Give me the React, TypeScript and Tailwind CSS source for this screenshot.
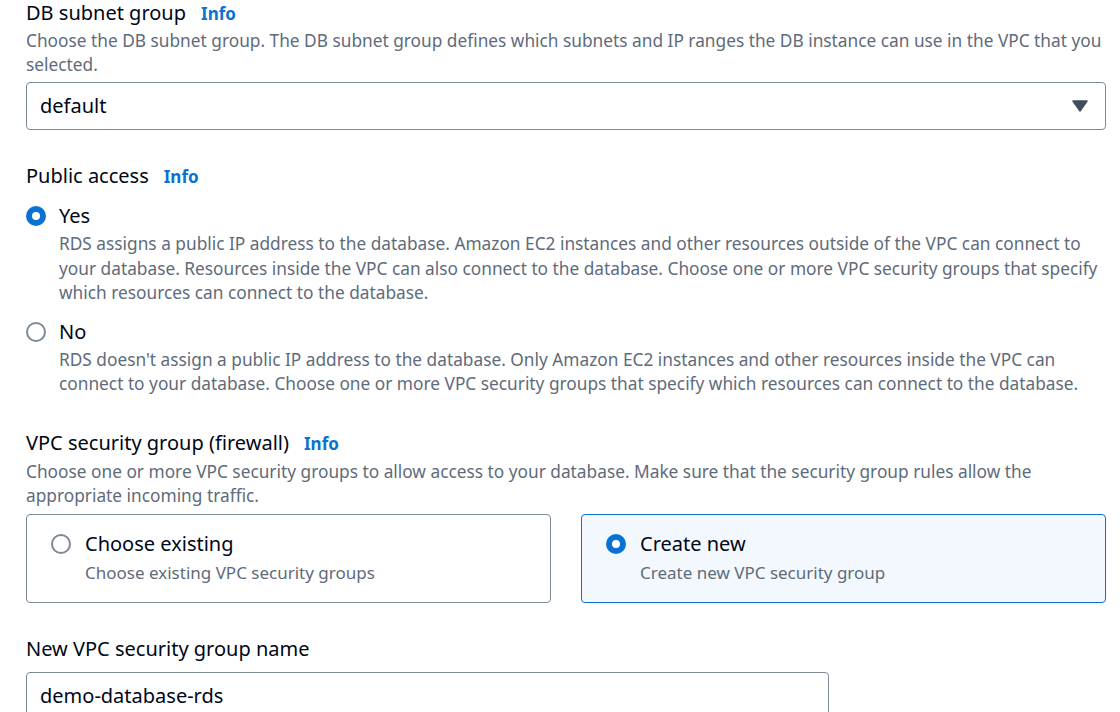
import React from 'react';

const font = { fontFamily: '"Noto Sans", "Open Sans", Arial, sans-serif' };

function Info() {
  return <span className="ml-[15px] text-[17px] font-bold text-[#0972d3]">Info</span>;
}

function Radio({ checked }: { checked: boolean }) {
  if (checked) {
    return (
      <span className="flex h-[20px] w-[20px] shrink-0 items-center justify-center rounded-full bg-[#0972d3]">
        <span className="h-[8px] w-[8px] rounded-full bg-white" />
      </span>
    );
  }
  return <span className="h-[20px] w-[20px] shrink-0 rounded-full border-2 border-[#7d8998] bg-white" />;
}

function RadioOption({ checked, label, desc }: { checked: boolean; label: string; desc: string }) {
  return (
    <div>
      <div className="flex items-center gap-[13px]">
        <Radio checked={checked} />
        <span className="text-[20px] leading-[26px] text-[#000716]">{label}</span>
      </div>
      <p className="mt-[3px] pl-[33px] text-[17.3px] leading-[24.5px] text-[#5f6b7a]">{desc}</p>
    </div>
  );
}

function Card({ checked, label, desc }: { checked: boolean; label: string; desc: string }) {
  return (
    <div
      className={
        'h-[89px] rounded-[4px] border px-[24px] pt-[16px] ' +
        (checked ? 'border-[#0972d3] bg-[#f2f8fd]' : 'border-[#7d8998] bg-white')
      }
    >
      <div className="flex items-center gap-[14px]">
        <Radio checked={checked} />
        <span className="text-[20px] leading-[26px] text-[#000716]">{label}</span>
      </div>
      <p className="mt-[4px] pl-[34px] text-[17px] leading-[24px] text-[#5f6b7a]">{desc}</p>
    </div>
  );
}

export default function App() {
  return (
    <div className="h-[712px] w-[1120px] overflow-hidden bg-white pl-[26px] pr-[14px]" style={font}>
      {/* DB subnet group */}
      <div className="pt-px">
        <div className="flex items-baseline">
          <span className="text-[20px] leading-[24px] text-[#000716]">DB subnet group</span>
          <Info />
        </div>
        <p className="mt-[2px] text-[17.3px] leading-[24px] text-[#5f6b7a]">
          Choose the DB subnet group. The DB subnet group defines which subnets and IP ranges the DB instance can use in
          the VPC that you selected.
        </p>
        <div className="mt-[5px] flex h-[48px] items-center justify-between rounded-[4px] border border-[#7d8998] pl-[13px] pr-[17px]">
          <span className="text-[20px] text-[#000716]">default</span>
          <svg width="16" height="12" viewBox="0 0 16 12">
            <path d="M1 1 L15 1 L8 11 Z" fill="#414d5c" stroke="#414d5c" strokeWidth="1.5" strokeLinejoin="round" />
          </svg>
        </div>
      </div>

      {/* Public access */}
      <div className="mt-[34px]">
        <div className="flex items-baseline">
          <span className="text-[20px] leading-[24px] text-[#000716]">Public access</span>
          <Info />
        </div>
        <div className="mt-[14px] flex flex-col gap-[13px]">
          <RadioOption
            checked
            label="Yes"
            desc="RDS assigns a public IP address to the database. Amazon EC2 instances and other resources outside of the VPC can connect to your database. Resources inside the VPC can also connect to the database. Choose one or more VPC security groups that specify which resources can connect to the database."
          />
          <RadioOption
            checked={false}
            label="No"
            desc="RDS doesn't assign a public IP address to the database. Only Amazon EC2 instances and other resources inside the VPC can connect to your database. Choose one or more VPC security groups that specify which resources can connect to the database."
          />
        </div>
      </div>

      {/* VPC security group */}
      <div className="mt-[34px]">
        <div className="flex items-baseline">
          <span className="text-[20px] leading-[24px] text-[#000716]">VPC security group (firewall)</span>
          <Info />
        </div>
        <p className="mt-[4px] text-[17.3px] leading-[24px] text-[#5f6b7a]">
          Choose one or more VPC security groups to allow access to your database. Make sure that the security group
          rules allow the appropriate incoming traffic.
        </p>
        <div className="mt-[6px] grid grid-cols-2 gap-[30px]">
          <Card checked={false} label="Choose existing" desc="Choose existing VPC security groups" />
          <Card checked label="Create new" desc="Create new VPC security group" />
        </div>
      </div>

      {/* New VPC security group name */}
      <div className="mt-[34px]">
        <span className="block text-[20px] leading-[24px] text-[#000716]">New VPC security group name</span>
        <div className="mt-[11px] flex h-[48px] w-[803px] items-center rounded-[4px] border border-[#7d8998] pl-[13px]">
          <span className="text-[20px] text-[#000716]">demo-database-rds</span>
        </div>
      </div>
    </div>
  );
}
